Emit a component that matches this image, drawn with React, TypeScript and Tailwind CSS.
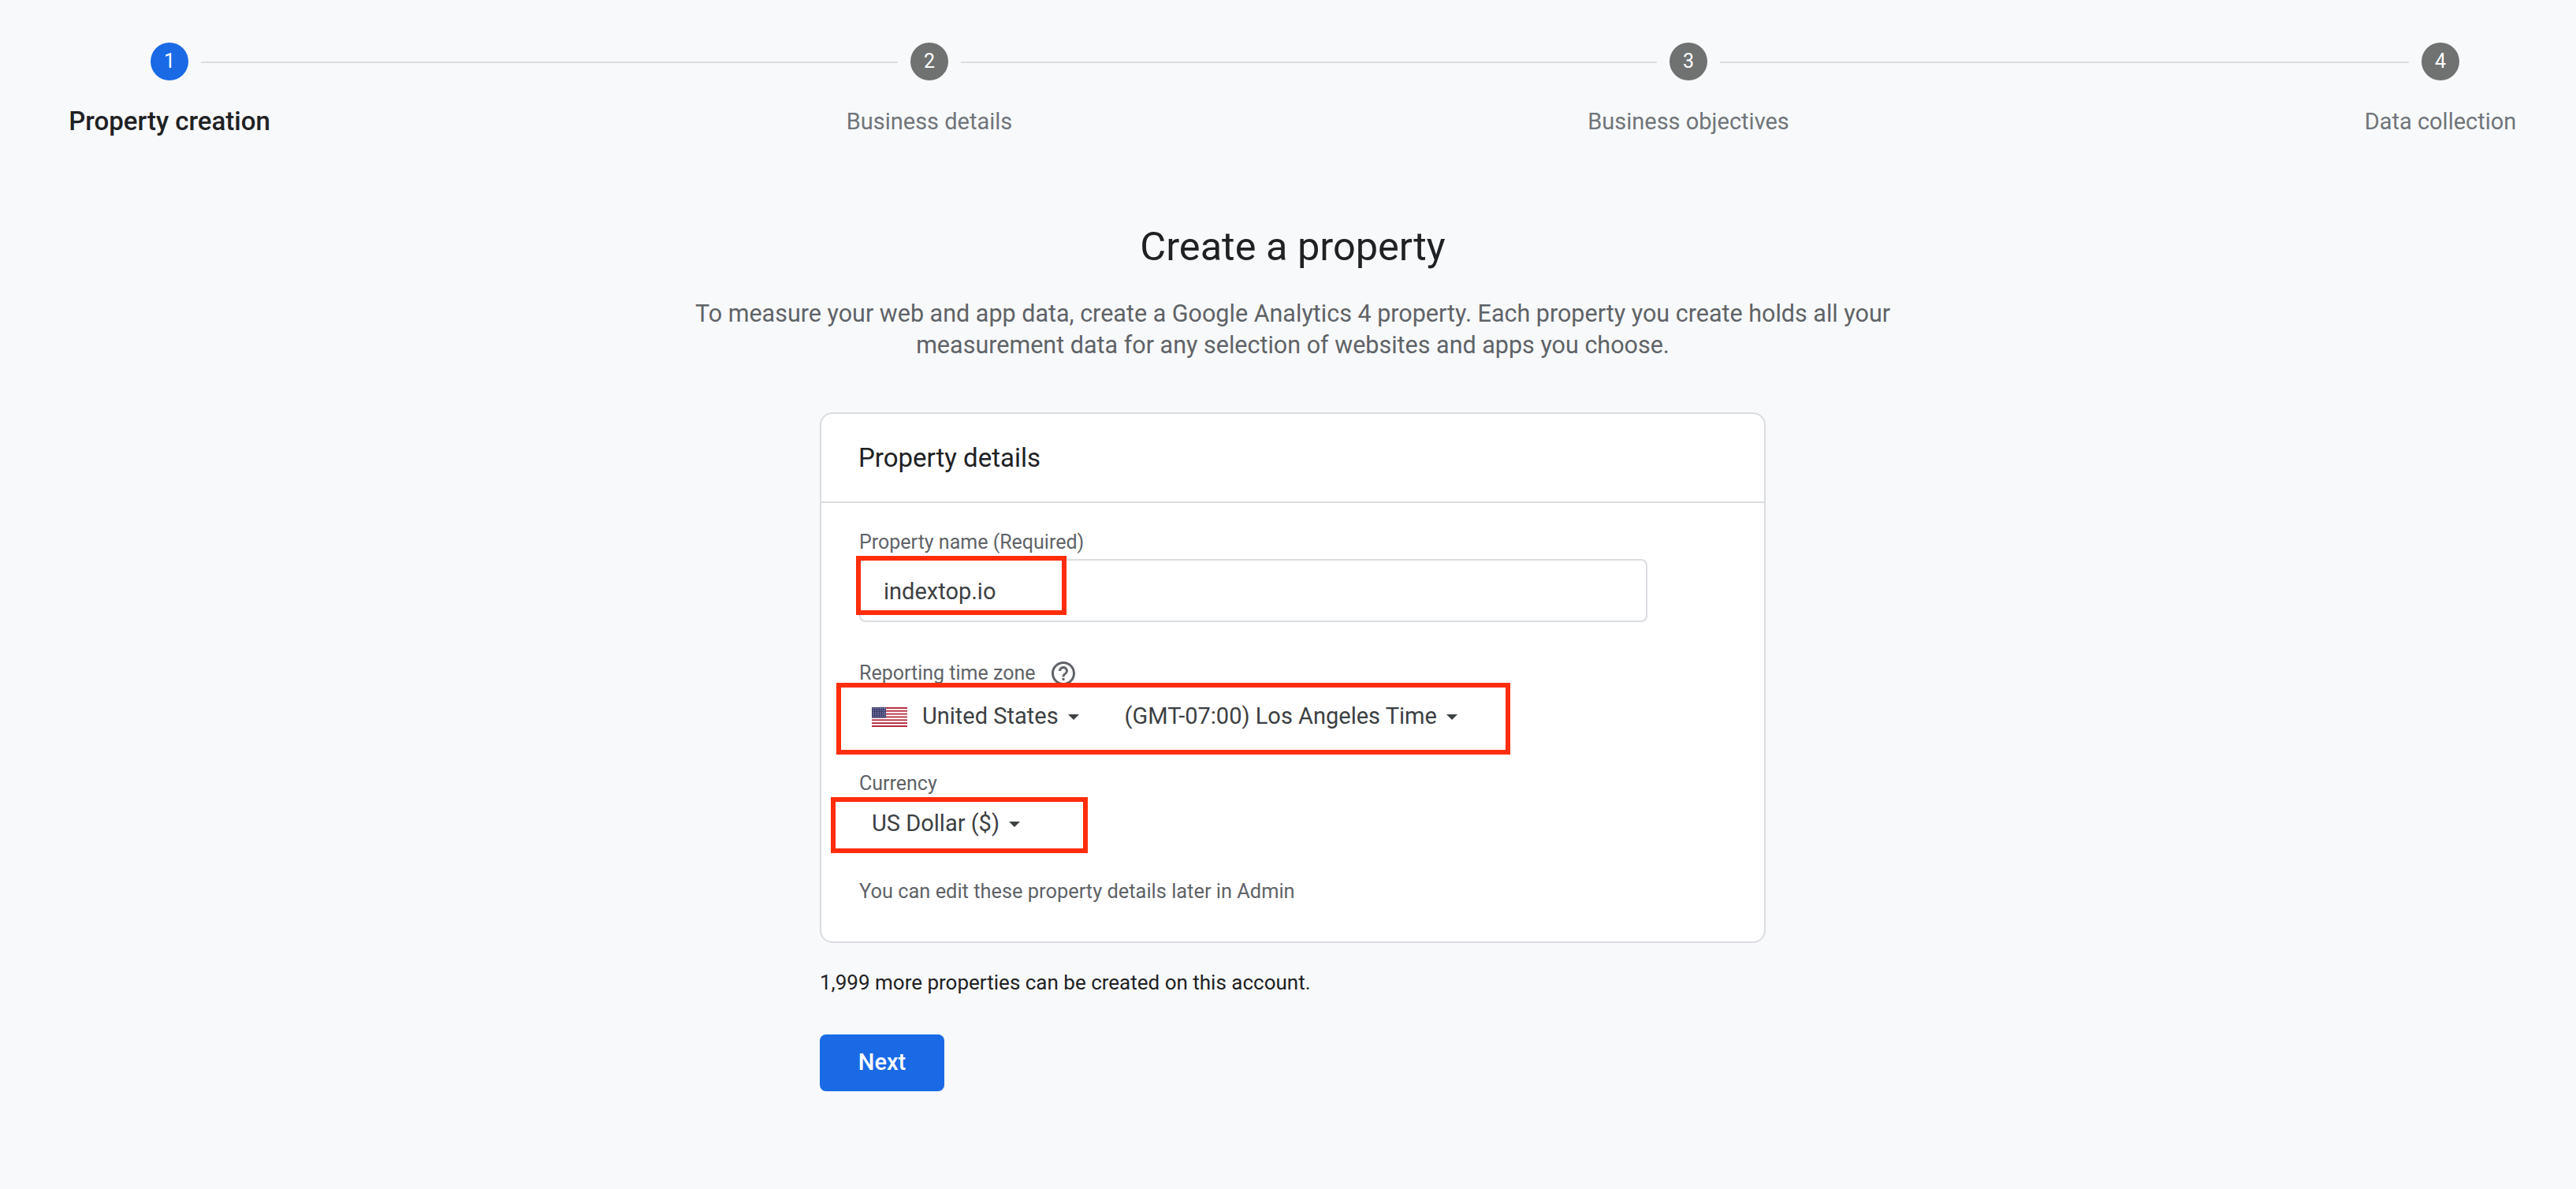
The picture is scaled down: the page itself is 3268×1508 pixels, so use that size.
import React from 'react';
import { MdHelpOutline } from 'react-icons/md';

const Step = ({ n, label, active }: { n: number; label: string; active?: boolean }) => (
  <div className="flex w-12 flex-col items-center">
    <div
      className={`flex h-12 w-12 shrink-0 items-center justify-center rounded-full text-[25px] text-white ${
        active ? 'bg-[#1a6ae6]' : 'bg-[#6f7271]'
      }`}
    >
      {n}
    </div>
    <div
      className={`mt-[32px] whitespace-nowrap leading-10 ${
        active ? 'text-[33px] font-medium text-[#202124]' : 'text-[29px] text-[#70757a]'
      }`}
    >
      {label}
    </div>
  </div>
);

const Caret = () => (
  <svg width="14" height="7" viewBox="0 0 14 7" className="shrink-0 fill-[#3c4043]">
    <polygon points="0,0 14,0 7,7" />
  </svg>
);

const UsFlag = () => {
  const stripes = [0, 1, 2, 3, 4, 5, 6, 7, 8, 9, 10, 11, 12];
  return (
    <svg width="45" height="25" viewBox="0 0 45 26" preserveAspectRatio="none" className="shrink-0">
      {stripes.map((i) => (
        <rect key={i} x="0" y={i * 2} width="45" height="2" fill={i % 2 === 0 ? '#b22234' : '#ffffff'} />
      ))}
      <rect x="0" y="0" width="18" height="14" fill="#3c3b6e" />
      {[1.5, 4, 6.5, 9, 11.5].map((y) =>
        [2, 5, 8, 11, 14, 16.5].map((x) => <circle key={`${x}-${y}`} cx={x} cy={y} r="0.6" fill="#c9cfe6" />),
      )}
    </svg>
  );
};

const RedBox = ({ className }: { className: string }) => (
  <div className={`pointer-events-none absolute border-[6px] border-[#ff2d0b] ${className}`} />
);

export default function App() {
  return (
    <div className="min-h-screen bg-[#f8f9fa] [font-family:Roboto,'Liberation_Sans',sans-serif]">
      {/* stepper */}
      <div className="flex items-start pl-[191px] pt-[54px]">
        <Step n={1} label="Property creation" active />
        <div className="mx-4 mt-6 h-0.5 w-[884px] bg-[#dadce0]" />
        <Step n={2} label="Business details" />
        <div className="mx-4 mt-6 h-0.5 w-[883px] bg-[#dadce0]" />
        <Step n={3} label="Business objectives" />
        <div className="mx-4 mt-6 h-0.5 w-[874px] bg-[#dadce0]" />
        <Step n={4} label="Data collection" />
      </div>

      <div className="ml-[1040px] w-[1200px]">
        <div className="mt-[109px] flex justify-center">
          <h1 className="whitespace-nowrap text-center text-[50.5px] leading-[60px] text-[#202124]">Create a property</h1>
        </div>
        <div className="mt-[35px] flex justify-center">
          <p className="whitespace-nowrap text-center text-[30.5px] leading-10 text-[#5f6368]">
            To measure your web and app data, create a Google Analytics 4 property. Each property you create holds all your
            <br />
            measurement data for any selection of websites and apps you choose.
          </p>
        </div>

        <div className="mt-[65px] rounded-2xl border-2 border-[#dadce0] bg-white">
          <div className="flex h-[113px] items-center border-b-2 border-[#dadce0] pl-[47px] text-[33px] text-[#202124]">
            Property details
          </div>
          <div className="pb-12 pl-[48px] pt-[34px]">
            <div className="text-[25px] leading-8 text-[#5f6368]">Property name (Required)</div>
            <div className="relative mt-[5px] flex h-20 w-[1000px] items-center rounded-lg border-2 border-[#dadce0] pl-[29px] pt-1 text-[29px] text-[#3c4043]">
              indextop.io
              <RedBox className="-left-[6px] -top-[6px] h-[75px] w-[267px]" />
            </div>

            <div className="mt-[47px] flex items-center text-[25px] leading-8 text-[#5f6368]">
              Reporting time zone
              <MdHelpOutline className="ml-[17px] text-[36px]" />
            </div>
            <div className="relative mt-[9px] flex h-14 items-center pl-4 text-[29px] text-[#3c4043]">
              <UsFlag />
              <span className="ml-[19px]">United States</span>
              <span className="ml-3"><Caret /></span>
              <span className="ml-[58px]">(GMT-07:00) Los Angeles Time</span>
              <span className="ml-3"><Caret /></span>
              <RedBox className="-left-[29px] -top-[15px] h-[91px] w-[855px]" />
            </div>

            <div className="mt-[41px] text-[25px] leading-8 text-[#5f6368]">Currency</div>
            <div className="relative mt-[7px] flex h-14 items-center pl-4 text-[29px] text-[#3c4043]">
              <span>US Dollar ($)</span>
              <span className="ml-3"><Caret /></span>
              <RedBox className="-left-[36px] -top-[6px] h-[71px] w-[326px]" />
            </div>

            <div className="mt-[41px] text-[25.4px] leading-8 text-[#5f6368]">You can edit these property details later in Admin</div>
          </div>
        </div>

        <div className="mt-[34px] text-[26px] leading-8 text-[#202124]">1,999 more properties can be created on this account.</div>
        <button className="mt-[50px] flex h-[72px] w-[158px] items-center justify-center rounded-lg bg-[#1a6ae6] text-[29px] font-medium text-white">
          Next
        </button>
      </div>
    </div>
  );
}
